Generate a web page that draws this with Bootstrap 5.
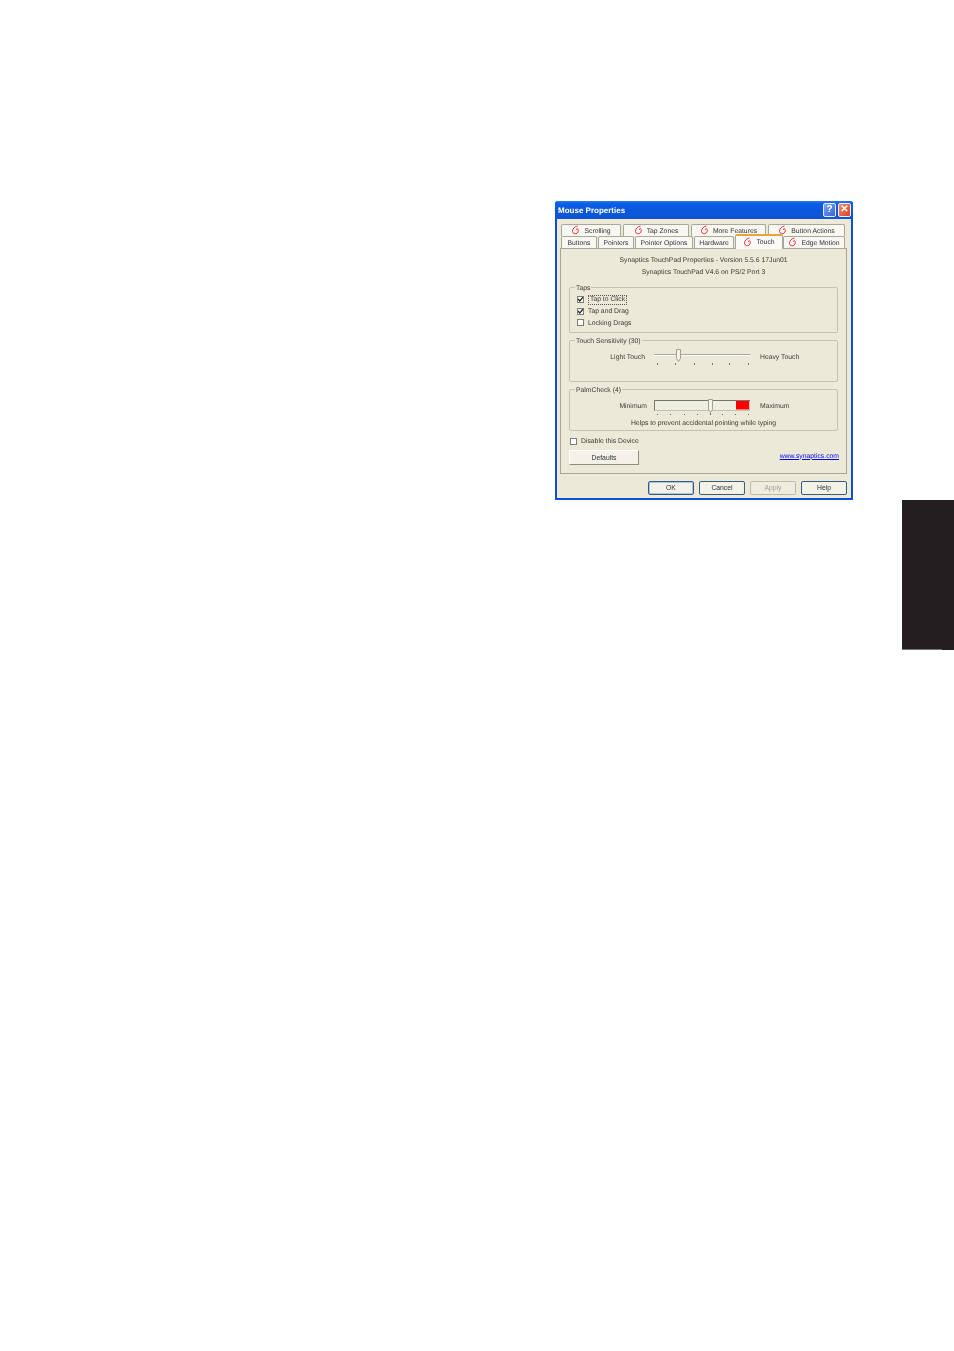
<!DOCTYPE html>
<html lang="en"><head><meta charset="utf-8"><title>Mouse Properties</title>
<link href="https://cdn.jsdelivr.net/npm/bootstrap@5.3.0/dist/css/bootstrap.min.css" rel="stylesheet">
<style>
html,body{background:#fff;height:1351px;overflow:hidden}
.sheet{height:1351px;padding-top:201px;font:6.8px/12px "Liberation Sans",Arial,sans-serif;color:#3a3a36;text-rendering:geometricPrecision}
.dlg{width:298px;height:299px;margin-left:555px;background:#ece9d8;border:2px solid #0b4fd6;border-top:0;border-radius:3px 3px 0 0;filter:blur(.3px)}
.ttl{height:18px;margin:0 -2px;padding:2px 2px 0 3px;background:linear-gradient(#2a78ee,#0a5ee6 15%,#0b57dc 50%,#0d55d4);color:#fff;font-weight:700;font-size:8px;border-radius:3px 3px 0 0}
.ttl-t{margin-top:4px;line-height:8px}
.wbtn{width:13px;height:14px;border:1px solid #e8eefc;border-radius:2px;background:linear-gradient(135deg,#7ea6f2,#2f62d8);display:flex;align-items:center;justify-content:center;color:#fff;font-size:10px;font-weight:700;line-height:12px}
.wbtn.cls{background:linear-gradient(135deg,#ee8f6c,#d8451f);margin-left:2px}
.trow{height:12px;padding-left:4px;gap:2px}
.trow.first{margin-top:5px}
.trow.second{gap:1px}
.tb{height:12px;background:#f8f7f2;border:1px solid #a9a796;border-bottom:0;border-radius:2px 2px 0 0;display:flex;align-items:center;justify-content:center;gap:4px;color:#333;line-height:10px;white-space:nowrap}
.tb span{padding-top:2px}
.tb svg{margin-bottom:1px}
.w60{width:60px}.w66{width:66px}.w75{width:75px}.w77{width:77px}.w36{width:36px}.w58{width:58px}.w40{width:40px}.w62{width:62px}
.tb.on{width:48px;height:15px;margin-top:-2px;margin-bottom:-1px;margin-right:-1px;background:#fbfaf6;border-top:2px solid #e8a33a;z-index:1;position:relative}
.tb.on span{padding-top:0}
.pnl{width:287px;height:226px;margin-left:3px;border:1px solid #a8a696;padding:6px 8px 0;background:#ece9d8}
.cap{height:12px;text-align:center}
fieldset.grp{border:1px solid #c4c2b2;border-radius:2px;padding:0 7px 0 7px;margin:0}
.grp legend{float:none;width:auto;font-size:6.8px;line-height:8px;margin:0 0 0 -2px;padding:0 1px;transform:translateY(1.5px)}
.g50{height:50px;margin-top:4px!important}
.g46{height:46px;margin-top:3px!important}
.ckrow{height:11.5px;gap:4px}
legend + .ckrow{margin-top:3px}
.ckrow span{margin-top:2px}
.form-check-input.xp{width:7px;height:7px;margin:0;border:1px solid #7d7d78;border-radius:0;background-color:#fff;flex:none}
.form-check-input.xp:checked{background-color:#fff;background-size:7px 7px;background-image:url("data:image/svg+xml,%3csvg xmlns='http://www.w3.org/2000/svg' viewBox='0 0 7 7'%3e%3cpath fill='none' stroke='%23222' stroke-width='1.3' d='M1 3l1.8 2L6 1.2'/%3e%3c/svg%3e")}
.ckrow .focusbox{border:1px dotted #555;padding:0 1px;line-height:8px;margin-top:0}
.slrow{gap:9px;margin:0 -7px;padding-top:3px}
.sl-l{width:75px;text-align:right;padding-top:5px}
.sl-l.wide{width:77px;margin-right:-2px}
.sl-r{padding-top:5px}
.sl-svg{display:block;flex:none}
.hint{text-align:center;margin:2px 0 0}
.disrow{gap:4px;height:12px;margin-top:4px;padding-left:1px}
.disrow span{margin-top:2px}
.btmrow{margin-top:3px}
.btn.xpb{--bs-btn-padding-x:0;--bs-btn-padding-y:0;--bs-btn-font-size:6.8px;--bs-btn-line-height:10px;--bs-btn-border-radius:2px;--bs-btn-color:#333;--bs-btn-bg:#f3f1e8;--bs-btn-border-color:#3b5d7c;--bs-btn-hover-bg:#f3f1e8;height:14px;width:46px;border-width:1px}
.btn.dflt{width:70px;height:15px;border-color:#8f8e80;border-top-color:#fff;border-left-color:#fff;border-radius:0}
.btn.isdef{box-shadow:inset 0 0 0 1px #a9c4ea}
.btn.off{color:#a5a293;border-color:#bdbaa8;background:#efede1;opacity:1}
.syn{color:#0000e6;text-decoration:underline;margin-top:-2px;margin-right:-1px;line-height:8px}
.foot{gap:5px;margin-top:7px;padding-right:4px;justify-content:flex-end}
.stab{width:52px;height:150px;margin-left:902px;background:#231f20;display:flex;flex-direction:column;justify-content:flex-end}
.stab-edge{width:40px;height:1px;background:#77736f}
</style></head><body class="m-0">
<div class="sheet">
<svg width="0" height="0" class="d-block"><defs><symbol id="swl" viewBox="0 0 9 10"><path d="M6.500 1C3.500 1.500 1.200 4 1.500 6.500 1.800 8.800 4.500 9.300 6 8.200 7.600 7 7.600 4.500 6.400 3.500L5 4.600" fill="none" stroke="#ea3040" stroke-width="1"/></symbol></defs></svg>
<div class="dlg">
  <div class="ttl d-flex justify-content-between align-items-start">
    <span class="ttl-t">Mouse Properties</span>
    <div class="d-flex"><div class="wbtn">?</div><div class="wbtn cls">✕</div></div>
  </div>
  <div class="trow first d-flex">
    <div class="tb w60"><svg width="9" height="10"><use href="#swl"/></svg><span>Scrolling</span></div>
    <div class="tb w66"><svg width="9" height="10"><use href="#swl"/></svg><span>Tap Zones</span></div>
    <div class="tb w75"><svg width="9" height="10"><use href="#swl"/></svg><span>More Features</span></div>
    <div class="tb w77"><svg width="9" height="10"><use href="#swl"/></svg><span>Button Actions</span></div>
  </div>
  <div class="trow second d-flex">
    <div class="tb w36"><span>Buttons</span></div>
    <div class="tb w36"><span>Pointers</span></div>
    <div class="tb w58"><span>Pointer Options</span></div>
    <div class="tb w40"><span>Hardware</span></div>
    <div class="tb on"><svg width="9" height="10"><use href="#swl"/></svg><span>Touch</span></div>
    <div class="tb w62"><svg width="9" height="10"><use href="#swl"/></svg><span>Edge Motion</span></div>
  </div>
  <div class="pnl">
    <div class="cap">Synaptics TouchPad Properties - Version 5.5.6 17Jun01</div>
    <div class="cap">Synaptics TouchPad V4.6 on PS/2 Port 3</div>
    <fieldset class="grp g50"><legend>Taps</legend>
      <div class="ckrow d-flex align-items-center"><input class="form-check-input xp" type="checkbox" checked aria-label="Tap to Click"><span class="focusbox">Tap to Click</span></div>
      <div class="ckrow d-flex align-items-center"><input class="form-check-input xp" type="checkbox" checked aria-label="Tap and Drag"><span>Tap and Drag</span></div>
      <div class="ckrow d-flex align-items-center"><input class="form-check-input xp" type="checkbox" aria-label="Locking Drags"><span>Locking Drags</span></div>
    </fieldset>
    <fieldset class="grp g46"><legend>Touch Sensitivity (30)</legend>
      <div class="slrow d-flex">
        <div class="sl-l">Light Touch</div>
        <svg class="sl-svg" width="97" height="20" viewBox="0 0 97 20">
          <path d="M0 7.500H96" stroke="#a8a696"/><path d="M0 8.500H96" stroke="#fff"/>
          <path d="M22.500 2.500h4v9l-2 3-2-3z" fill="#f3f1e8" stroke="#a3a191"/>
          <path d="M3.500 16v2M21.500 16v2M40.500 16v2M58.500 16v2M75.500 16v2M94.500 16v2" stroke="#777"/>
        </svg>
        <div class="sl-r">Heavy Touch</div>
      </div>
    </fieldset>
    <fieldset class="grp g46"><legend>PalmCheck (4)</legend>
      <div class="slrow d-flex">
        <div class="sl-l wide">Minimum</div>
        <svg class="sl-svg" width="97" height="20" viewBox="0 0 97 20">
          <rect x=".5" y="4.500" width="95" height="10" fill="#efeee2" stroke="#c4c2b2"/>
          <path d="M.5 4.500H96M.5 4.500v10" stroke="#77756a"/>
          <rect x="82" y="5" width="13" height="8.500" fill="#f00"/>
          <path d="M54.500 3.500h4v10l-2 3-2-3z" fill="#f3f1e8" stroke="#a3a191"/>
          <path d="M3.500 18v1M16.500 18v1M30.500 18v1M43.500 18v1M56.500 17v2M68.500 18v1M81.500 18v1M94.500 18v1" stroke="#666"/>
        </svg>
        <div class="sl-r">Maximum</div>
      </div>
      <p class="hint">Helps to prevent accidental pointing while typing</p>
    </fieldset>
    <div class="disrow d-flex align-items-center"><input class="form-check-input xp" type="checkbox" aria-label="Disable this Device"><span>Disable this Device</span></div>
    <div class="btmrow d-flex justify-content-between align-items-center">
      <button type="button" class="btn xpb dflt">Defaults</button>
      <a href="#" class="syn">www.synaptics.com</a>
    </div>
  </div>
  <div class="foot d-flex">
    <button type="button" class="btn xpb isdef">OK</button>
    <button type="button" class="btn xpb">Cancel</button>
    <button type="button" class="btn xpb off">Apply</button>
    <button type="button" class="btn xpb">Help</button>
  </div>
</div>
<div class="stab"><div class="stab-edge"></div></div>
</div>
</body></html>
